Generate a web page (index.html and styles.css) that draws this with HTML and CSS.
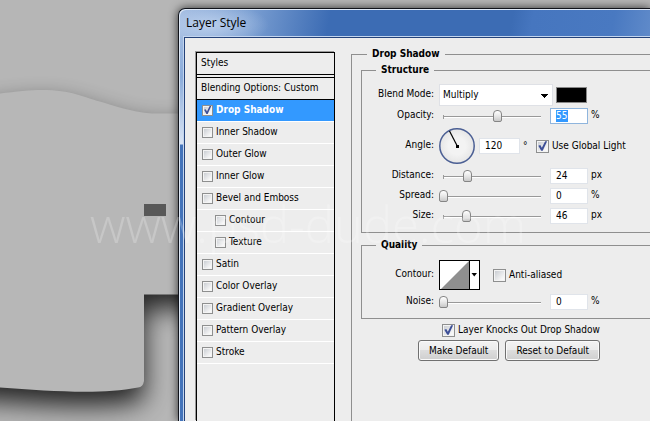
FILE: index.html
```html
<!DOCTYPE html>
<html lang="en">
<head>
<meta charset="utf-8">
<title>Layer Style</title>
<link rel="stylesheet" href="styles.css">
</head>
<body>
<svg class="canvas" aria-hidden="true">
  <defs>
    <filter id="soft" x="-30%" y="-30%" width="160%" height="160%"><feGaussianBlur stdDeviation="13"/></filter>
    <path id="shape" d="M-60 104 C-30 98 15 90 42 90 C72 90 82 97 105 103 C130 111 143 113.500 158 113.500 L300 113.500 L300 294.500 L144 294.500 L144 381 Q143 387 138 387.500 C100 395 50 391 0 387.500 L-60 383 Z"/>
  </defs>
  <rect width="100%" height="100%" fill="#b6b6b6"/>
  <use href="#shape" y="14" fill="#000" opacity=".8" filter="url(#soft)"/>
  <use href="#shape" fill="#b7b7b7"/>
  <rect x="144" y="204" width="22" height="12" fill="#585858"/>
</svg>
<main class="window">
  <h1 class="title">Layer Style</h1>
  <div class="client">
    <section class="styles">
      <h2 class="styles-head">Styles</h2>
      <div class="styles-head blending">Blending Options: Custom</div>
      <ul class="effects">
        <li class="selected"><label><input type="checkbox" checked>Drop Shadow</label></li>
        <li><label><input type="checkbox">Inner Shadow</label></li>
        <li><label><input type="checkbox">Outer Glow</label></li>
        <li><label><input type="checkbox">Inner Glow</label></li>
        <li><label><input type="checkbox">Bevel and Emboss</label></li>
        <li class="sub"><label><input type="checkbox">Contour</label></li>
        <li class="sub"><label><input type="checkbox">Texture</label></li>
        <li><label><input type="checkbox">Satin</label></li>
        <li><label><input type="checkbox">Color Overlay</label></li>
        <li><label><input type="checkbox">Gradient Overlay</label></li>
        <li><label><input type="checkbox">Pattern Overlay</label></li>
        <li><label><input type="checkbox">Stroke</label></li>
      </ul>
    </section>
    <fieldset class="panel">
      <legend>Drop Shadow</legend>
      <fieldset class="group">
        <legend>Structure</legend>
        <div class="row blend">
          <label for="mode">Blend Mode:</label>
          <div class="controls">
            <select id="mode"><option>Multiply</option></select>
            <button class="swatch" type="button" aria-label="Shadow color"></button>
          </div>
        </div>
        <div class="row">
          <label for="opacity">Opacity:</label>
          <input id="opacity" type="range" min="0" max="100" value="55">
          <div class="field focused"><input class="selected-text" type="text" value="55" aria-label="Opacity value"></div>
          <span>%</span>
        </div>
        <div class="row angle">
          <label for="angle">Angle:</label>
          <div class="controls">
            <svg class="dial" width="36" height="36" viewBox="0 0 36 36" aria-hidden="true">
              <defs><radialGradient id="face"><stop offset=".5" stop-color="#f3f3f3"/><stop offset="1" stop-color="#e6e6e6"/></radialGradient></defs>
              <circle cx="18" cy="18" r="17.200" fill="url(#face)" stroke="#4b5f94" stroke-width="1.500"/>
              <path d="M18.500 18.500 L10.500 3" stroke="#000" stroke-width="1.200"/>
              <rect x="17" y="17" width="3" height="3"/>
            </svg>
            <div class="field"><input id="angle" type="text" value="120"></div>
            <span class="degree">°</span>
            <label class="check"><input type="checkbox" checked>Use Global Light</label>
          </div>
        </div>
        <div class="row">
          <label for="distance">Distance:</label>
          <input id="distance" type="range" min="0" max="100" value="24">
          <div class="field"><input type="text" value="24" aria-label="Distance value"></div>
          <span>px</span>
        </div>
        <div class="row">
          <label for="spread">Spread:</label>
          <input id="spread" type="range" min="0" max="100" value="0">
          <div class="field"><input type="text" value="0" aria-label="Spread value"></div>
          <span>%</span>
        </div>
        <div class="row">
          <label for="size">Size:</label>
          <input id="size" type="range" min="0" max="200" value="46">
          <div class="field"><input type="text" value="46" aria-label="Size value"></div>
          <span>px</span>
        </div>
      </fieldset>
      <fieldset class="group quality">
        <legend>Quality</legend>
        <div class="row contour-row">
          <label for="contour">Contour:</label>
          <div class="controls">
            <button class="contour" id="contour" type="button">
              <svg width="41" height="30" viewBox="0 0 41 30" aria-hidden="true">
                <rect width="41" height="30" fill="#000"/>
                <rect x="1" y="1" width="29" height="28" fill="#fff"/>
                <path d="M2 29 L30 1 V29 Z" fill="#8f8f8f"/>
                <rect x="31" y="1" width="9" height="28" fill="#fff"/>
                <path d="M32.500 13 H38 L35.250 16.500 Z"/>
              </svg>
            </button>
            <label class="check"><input type="checkbox">Anti-aliased</label>
          </div>
        </div>
        <div class="row">
          <label for="noise">Noise:</label>
          <input id="noise" type="range" min="0" max="100" value="0">
          <div class="field"><input type="text" value="0" aria-label="Noise value"></div>
          <span>%</span>
        </div>
      </fieldset>
      <label class="check knock"><input type="checkbox" checked>Layer Knocks Out Drop Shadow</label>
      <div class="buttons">
        <button type="button">Make Default</button>
        <button type="button">Reset to Default</button>
      </div>
    </fieldset>
  </div>
</main>
<div class="watermark">www.psd-dude.com</div>
</body>
</html>
```
FILE: styles.css
```css
* { box-sizing: border-box; }

body {
  margin: 0;
  min-height: 100vh;
  display: flex;
  overflow: hidden;
  background: #b6b6b6;
  color: #000;
  font: 10px/14px "DejaVu Sans Condensed", Tahoma, "DejaVu Sans", sans-serif;
}

input, select, button { font: inherit; color: inherit; margin: 0; }

.canvas { position: absolute; left: 0; top: 0; width: 100%; height: 100%; }

.window {
  position: relative;
  flex: 1;
  display: flex;
  flex-direction: column;
  margin: 8px 0 0 178px;
  padding-left: 5px;
  border: solid #10131a;
  border-width: 1px 0 0 1px;
  border-radius: 7px 0 0 0;
  background:
    linear-gradient(#a0bbe1, #8caddb 40px, #d9e4f4 107px, #4373ba 108px) 0 28px / 5px 100% no-repeat,
    radial-gradient(ellipse 60px 22px at 30px 16px, rgba(190, 210, 238, .9), transparent),
    linear-gradient(100deg, #9fb9df, #7b9fd2 70px, #3c6cb4 150px, #3c6cb4 330px, #4676bf 350px, #4979c1 430px, #86a8d8);
  box-shadow: inset 1px 1px 0 #dfe9f7, 0 0 10px rgba(0, 0, 0, .75);
}

.title {
  margin: 0;
  padding: 6px 0 6px 2px;
  font: 12px/16px "Open Sans", "Noto Sans", sans-serif;
}

.client {
  flex: 1;
  display: flex;
  gap: 16px;
  padding: 14px 0 0 11px;
  border: solid #24427a;
  border-width: 1px 0 0 1px;
  background: #ededed;
  box-shadow: 0 0 0 1px #c3d5ee;
}

.styles {
  width: 139px;
  border: solid #000;
  border-width: 1px 1px 0 1px;
  box-shadow: -1px -1px 0 #999;
}

.styles-head {
  height: 22px;
  margin: 0 0 2px;
  padding: 3px 4px;
  border-bottom: 1px solid #000;
  font-size: 10px;
  font-weight: normal;
}

.blending {
  height: 23px;
  margin: 0;
  border-top: 1px solid #000;
}

.effects { list-style: none; margin: 0; padding: 0; }
.effects li { height: 22px; padding-left: 5px; border-bottom: 1px solid #fff; }
.effects .sub { padding-left: 18px; }
.effects .selected { background: #3399ff; color: #fff; font-weight: bold; }
.effects label { display: flex; align-items: center; gap: 3px; height: 20px; }

input[type="checkbox"] {
  appearance: none;
  flex: none;
  width: 11px;
  height: 11px;
  border: 1px solid #8e8f8f;
  background: linear-gradient(135deg, #c4c8ce, #f8f8f8 80%);
  box-shadow: inset 0 0 0 1px #f4f4f4;
}
.panel input[type="checkbox"] { width: 13px; height: 13px; }

input[type="checkbox"]:checked::before {
  content: "";
  display: block;
  width: 100%;
  height: 100%;
  background: #3d4f97;
  clip-path: polygon(12% 48%, 30% 42%, 44% 66%, 74% 6%, 92% 6%, 52% 94%, 38% 94%);
}

.panel, .group {
  min-width: 0;
  margin: 0;
  border: 1px solid #8f8f8f;
  border-right: 0;
}
.panel {
  flex: 1;
  margin-top: -5px;
  padding: 2px 0 0 9px;
  border-bottom: 0;
}
legend { margin-left: 14px; padding: 0 5px; font-weight: bold; line-height: 14px; }
.panel > legend { margin-left: 6px; }
.group { padding: 6px 0 6px; }
.group + .group { margin-top: 5px; }

.row {
  display: grid;
  grid-template-columns: 72px 107px 47px auto;
  justify-content: start;
  align-items: center;
  height: 20px;
}
.blend { height: 23px; }
.row > label { justify-self: end; padding-bottom: 2px; }
.row > input, .controls { margin-left: 5px; }
.row > .field { margin-left: 9px; }
.row > span { margin-left: 3px; padding-bottom: 2px; }
.controls { display: flex; align-items: center; grid-column: 2 / -1; }

select {
  appearance: none;
  width: 114px;
  height: 22px;
  padding: 0 3px;
  border: 1px solid #dfe1e6;
  border-radius: 0;
  background:
    linear-gradient(#000, #000) 101px 9px / 7px 1px no-repeat,
    linear-gradient(#000, #000) 102px 10px / 5px 1px no-repeat,
    linear-gradient(#000, #000) 103px 11px / 3px 1px no-repeat,
    linear-gradient(#000, #000) 104px 12px / 1px 1px no-repeat,
    #fff;
}
.swatch { width: 31px; height: 16px; margin-left: 3px; padding: 0; border: 1px solid #888; background: #000; }

input[type="range"] {
  appearance: none;
  width: 107px;
  height: 13px;
  background:
    linear-gradient(#999, #999) 4px 5px / 1px 4px no-repeat,
    linear-gradient(#999 1px, #fff 1px) 4px 6px / 98px 2px no-repeat;
}
input[type="range"]::-webkit-slider-thumb {
  appearance: none;
  width: 9px;
  height: 12px;
  border: 1px solid #858585;
  border-radius: 4px 4px 2px 2px;
  background: linear-gradient(#fff, #e8e8e8 50%, #c9c9c9);
}

.field {
  width: 38px;
  height: 16px;
  padding: 1px 5px;
  border: 1px solid #e0e4ea;
  background: #fff;
}
.focused { border-color: #8fb5dd; }
.field input { display: block; width: 100%; height: 12px; padding: 0; border: 0; background: none; line-height: 12px; }
.field .selected-text { width: 12px; background: #3399ff; color: #fff; }

.angle { height: 40px; }
.angle .field { width: 41px; margin-left: 4px; }
.degree { width: 13px; margin-left: 3px; }

.check { display: flex; align-items: center; gap: 3px; }
.contour { display: block; height: 30px; padding: 0; border: 0; }
.contour + .check { margin-left: 13px; }
.contour-row { height: 34px; }
.knock { margin: 4px 0 3px 81px; }
.buttons { display: flex; gap: 6px; margin-left: 57px; }
.buttons button {
  height: 21px;
  padding: 0 10px;
  border: 1px solid #707070;
  border-radius: 3px;
  background: linear-gradient(#f3f3f3, #ebebeb 49%, #dddddd 50%, #cfcfcf);
  box-shadow: inset 0 0 0 1px #fafafa;
}

.watermark {
  position: absolute;
  left: 90px;
  top: 192px;
  color: #fff;
  opacity: .22;
  font: 300 49px/64px "Open Sans", sans-serif;
  pointer-events: none;
}
```
